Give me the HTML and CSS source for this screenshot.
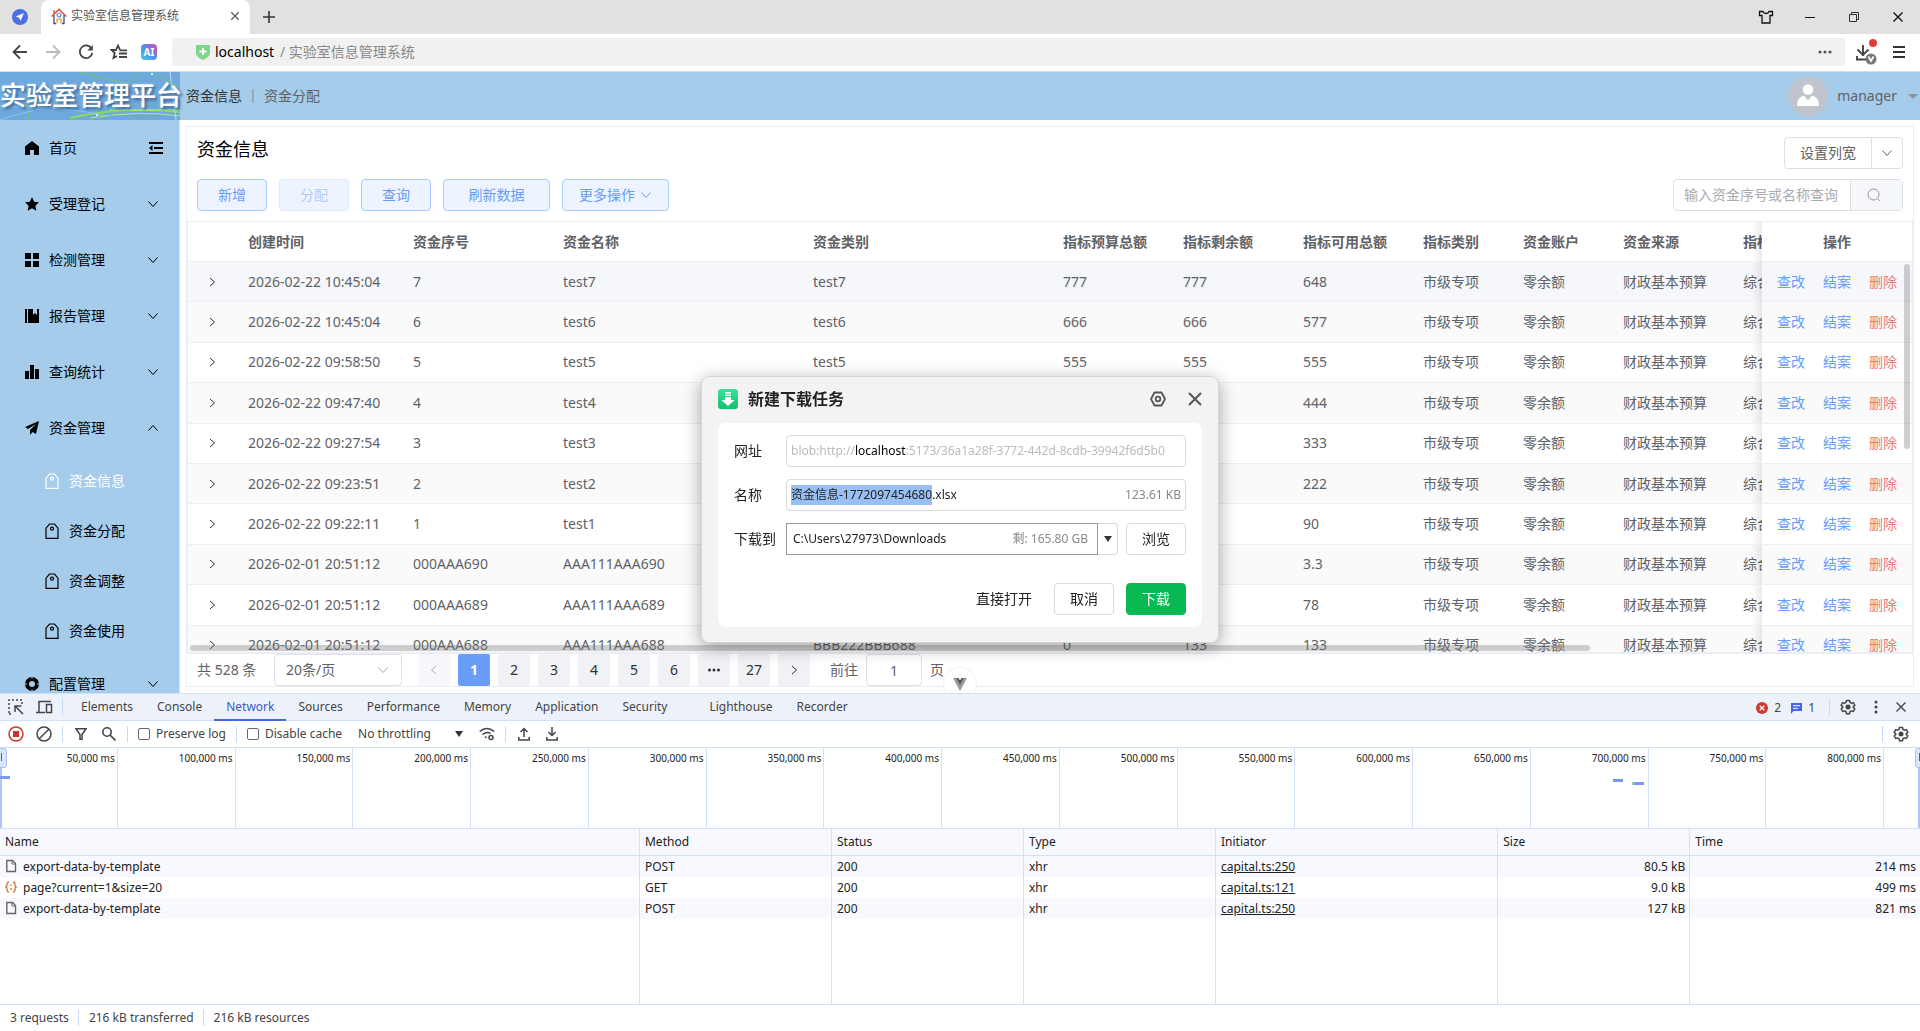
FILE: index.html
```html
<!DOCTYPE html>
<html lang="zh-CN">
<head>
    <meta charset="UTF-8">
    <title>实验室信息管理系统</title>
    <link rel="stylesheet" href="styles.css">
</head>
<body>
    <svg class="sprite" aria-hidden="true">
        <symbol id="i-down" viewBox="0 0 12 12"><path d="M1.5 3.5 6 8.5l4.500-5" fill="none" stroke="currentColor"/></symbol>
        <symbol id="i-right" viewBox="0 0 12 12"><path d="M4 2l4.500 4L4 10" fill="none" stroke="currentColor"/></symbol>
        <symbol id="i-tag" viewBox="0 0 16 16"><path d="M2 15.300V5.200L5.500 1h5L14 5.200v10.100z" fill="none" stroke="currentColor" stroke-width="1.200"/><circle cx="8" cy="5.700" r="1.500" fill="none" stroke="currentColor" stroke-width="1.200"/></symbol>
        <symbol id="i-close" viewBox="0 0 12 12"><path d="M1.500 1.500l9 9m0-9l-9 9" fill="none" stroke="currentColor" stroke-width="1.400"/></symbol>
        <symbol id="i-gear" viewBox="0 0 16 16"><path d="M6.500 1.400h3l.5 2 1.300.8 2-.6 1.500 2.600-1.500 1.400v.9l1.500 1.400-1.500 2.600-2-.6-1.300.8-.5 2h-3l-.5-2-1.300-.8-2 .6-1.500-2.600 1.500-1.400v-.9L1.200 6.200l1.500-2.600 2 .6L6 3.400z" fill="none" stroke="currentColor" stroke-width="1.500" stroke-linejoin="round"/><circle cx="8" cy="8" r="2.500" fill="currentColor"/></symbol>
        <symbol id="i-file" viewBox="0 0 12 14"><path d="M1.800 1.500h5.700l3 3v8H1.800z" fill="none" stroke="currentColor" stroke-width="1.400"/><path d="M7 1.500v3.500h3.500" fill="none" stroke="currentColor"/></symbol>
    </svg>

    <div class="tabbar">
        <svg class="ext" width="16" height="16" viewBox="0 0 16 16"><circle cx="8" cy="8" r="8" fill="#4a70e2"/><path d="M12 4L3.700 7.600l3.500 1.200L8.400 12z" fill="#fff"/></svg>
        <div class="tab">
            <svg width="16" height="17" viewBox="0 0 16 17" fill="none"><path d="M3 7v8.500h2M13 7v8.500h-2" stroke="#3f4a86" stroke-width="1.300"/><path d="M.7 8.500L8 1.200l7.300 7.300M3 5.500V2" stroke="#e0413a" stroke-width="1.300"/><circle cx="8" cy="7" r="2" stroke="#5b8fe0" stroke-width="1.200"/><path d="M6 15.500v-4.300h4v4.300" stroke="#efa135" stroke-width="1.300"/></svg>
            <span>实验室信息管理系统</span>
            <button class="icon-btn tab-close" aria-label="关闭标签页"><svg width="10" height="10"><use href="#i-close"/></svg></button>
        </div>
        <button class="icon-btn new-tab" aria-label="新标签页"><svg width="12" height="12" viewBox="0 0 12 12"><path d="M6 0v12M0 6h12" stroke="#333" stroke-width="1.600"/></svg></button>
        <div class="win-btns">
            <button class="icon-btn" aria-label="皮肤"><svg width="16" height="14" viewBox="0 0 16 14"><path d="M5 1.500H1.500v4H4v7.500h8V5.500h2.500v-4H11q-.5 2-3 2t-3-2z" fill="none" stroke="#111" stroke-width="1.300"/></svg></button>
            <button class="icon-btn" aria-label="最小化"><svg width="10" height="10" viewBox="0 0 10 10"><path d="M0 5.500h10" stroke="#111"/></svg></button>
            <button class="icon-btn" aria-label="还原"><svg width="10" height="10" viewBox="0 0 10 10"><path d="M.5 2.500h7v7h-7zM2.500 2.500v-2h7v7h-2" fill="none" stroke="#333"/></svg></button>
            <button class="icon-btn" aria-label="关闭"><svg width="12" height="12"><use href="#i-close"/></svg></button>
        </div>
    </div>

    <div class="navbar">
        <button class="icon-btn" aria-label="后退"><svg width="16" height="16" viewBox="0 0 16 16"><path d="M15 8H2M8 1.500L1.500 8 8 14.500" fill="none" stroke="#444" stroke-width="1.800"/></svg></button>
        <button class="icon-btn" aria-label="前进"><svg width="16" height="16" viewBox="0 0 16 16"><path d="M1 8h13M8 1.500L14.500 8 8 14.500" fill="none" stroke="#bbb" stroke-width="1.800"/></svg></button>
        <button class="icon-btn" aria-label="刷新"><svg width="16" height="16" viewBox="0 0 16 16"><path d="M13.500 4.500A6.300 6.300 0 1 0 14.300 9" fill="none" stroke="#444" stroke-width="1.800"/><path d="M14.800 1v5.500H9.300z" fill="#444"/></svg></button>
        <button class="icon-btn" aria-label="收藏"><svg width="17" height="16" viewBox="0 0 17 16" fill="none" stroke="#444" stroke-width="1.800"><path d="M10 6L8 1.500 6 6H1.500l3.200 3-1.200 5L7 12"/><path d="M9.500 6.300H17M9 9.500h8M9 13h8"/></svg></button>
        <span class="ai">AI</span>
        <div class="address">
            <svg width="14" height="16" viewBox="0 0 14 16"><path d="M0 1h14v8q0 4-7 7Q0 13 0 9z" fill="#7fd688"/><path d="M7 4v7M3.500 7.500h7" stroke="#fff" stroke-width="2"/></svg>
            <input type="text" value="localhost" aria-label="地址">
            <span>/ 实验室信息管理系统</span>
            <button class="icon-btn more" aria-label="更多"><svg width="14" height="4" viewBox="0 0 14 4"><g fill="#555"><circle cx="2" cy="2" r="1.600"/><circle cx="7" cy="2" r="1.600"/><circle cx="12" cy="2" r="1.600"/></g></svg></button>
        </div>
        <button class="icon-btn dl" aria-label="下载"><svg width="22" height="26" viewBox="0 0 22 26"><path d="M7 6v11M1.500 10.500L7 16l5.500-5.500M1 17v3.500h10" fill="none" stroke="#444" stroke-width="1.900"/><circle cx="17" cy="4" r="4" fill="#dd3f36"/><circle cx="15" cy="20" r="5.500" fill="#777"/><path d="M12.500 17.500L15 22l2.500-4.500" fill="none" stroke="#fff" stroke-width="1.600"/></svg></button>
        <button class="icon-btn" aria-label="菜单"><svg width="12" height="12" viewBox="0 0 12 12"><path d="M0 1h12M0 6h12M0 11h12" stroke="#333" stroke-width="1.800"/></svg></button>
    </div>

    <div class="app">
        <aside class="sidebar">
            <div class="logo">
                <svg width="180" height="48" viewBox="0 0 180 48" fill="none" preserveAspectRatio="none"><path d="M70 46Q120 34 180 40" stroke="#86dc5c" stroke-width="2"/><path d="M90 46q50-8 90-2M110 38h70" stroke="#b6ec7a"/><path d="M25 20l4 28M78 0l50 12M94 0q-4 24 6 48M140 0q-26 20-30 48M150 0l30 16" stroke="#6cc77c"/><path d="M0 48Q40 34 70 34M0 34q60 0 110 10" stroke="#8fc4ee"/><path d="M170 0l6 48" stroke="#b8dcf5"/><circle cx="152" cy="2" r="1" fill="#fff"/><circle cx="97" cy="43" r="1" fill="#fff"/></svg>
                <span>实验室管理平台</span>
            </div>
            <nav class="menu">
                <a href="#"><svg width="14" height="14" viewBox="0 0 14 14"><path d="M7 0l7 5.500V14H9V9H5v5H0V5.500z"/></svg>首页
                    <svg class="tail" width="14" height="12" viewBox="0 0 14 12"><path d="M0 0h14v2H0zM5 5h9v2H5zM0 10h14v2H0zM3.500 3v6L0 6z"/></svg></a>
                <a href="#"><svg width="14" height="14" viewBox="0 0 14 14"><path d="M7 0l2.200 4.700 4.800.5-3.600 3.500 1 5.100L7 11.300l-4.400 2.500 1-5.100L0 5.200l4.800-.5z"/></svg>受理登记<svg class="arrow" width="12" height="12"><use href="#i-down"/></svg></a>
                <a href="#"><svg width="14" height="14" viewBox="0 0 14 14"><path d="M0 0h6v6H0zM8 0h6v6H8zM0 8h6v6H0zM8 8h6v6H8z"/></svg>检测管理<svg class="arrow" width="12" height="12"><use href="#i-down"/></svg></a>
                <a href="#"><svg width="14" height="14" viewBox="0 0 14 14"><path d="M0 0h2v14H0zM3 0h5v6l2-2 2 2V0h2v14H3z"/></svg>报告管理<svg class="arrow" width="12" height="12"><use href="#i-down"/></svg></a>
                <a href="#"><svg width="14" height="14" viewBox="0 0 14 14"><path d="M0 6h4v8H0zM5 0h4v14H5zM10 4h4v10h-4z"/></svg>查询统计<svg class="arrow" width="12" height="12"><use href="#i-down"/></svg></a>
                <a href="#"><svg width="14" height="14" viewBox="0 0 14 14"><path d="M14 0L0 6l3 2 8-5-6 6v5l2.500-3L11 13z"/></svg>资金管理<svg class="arrow up" width="12" height="12"><use href="#i-down"/></svg></a>
                <a class="sub active" href="#"><svg width="16" height="16"><use href="#i-tag"/></svg>资金信息</a>
                <a class="sub" href="#"><svg width="16" height="16"><use href="#i-tag"/></svg>资金分配</a>
                <a class="sub" href="#"><svg width="16" height="16"><use href="#i-tag"/></svg>资金调整</a>
                <a class="sub" href="#"><svg width="16" height="16"><use href="#i-tag"/></svg>资金使用</a>
                <a href="#"><svg width="14" height="14" viewBox="0 0 14 14"><circle cx="7" cy="7" r="5" fill="none" stroke="#000" stroke-width="4"/><path d="M7 0v2M7 12v2M0 7h2M12 7h2" stroke="#a5cceb"/></svg>配置管理<svg class="arrow" width="12" height="12"><use href="#i-down"/></svg></a>
            </nav>
        </aside>

        <div class="right">
            <header class="topbar">
                <a class="current" href="#">资金信息</a>
                <i></i>
                <a href="#">资金分配</a>
                <button class="user">
                    <svg width="40" height="40" viewBox="0 0 40 40"><circle cx="20" cy="20" r="20" fill="#c0c4cc"/><circle cx="20" cy="13.500" r="5.300" fill="#fff"/><path d="M9 30q0-9 7-10.500l4 5 4-5Q31 21 31 30z" fill="#fff"/></svg>
                    manager
                    <span class="caret"></span>
                </button>
            </header>
            <main class="card">
                <div class="card-row">
                    <h2>资金信息</h2>
                    <div class="split">
                        <button>设置列宽</button>
                        <button class="split-arrow" aria-label="展开"><svg width="12" height="12"><use href="#i-down"/></svg></button>
                    </div>
                </div>
                <div class="card-row">
                    <div class="actions">
                        <button>新增</button>
                        <button disabled>分配</button>
                        <button>查询</button>
                        <button class="wide">刷新数据</button>
                        <button class="wide">更多操作<svg width="12" height="12"><use href="#i-down"/></svg></button>
                    </div>
                    <div class="search">
                        <input type="text" placeholder="输入资金序号或名称查询" aria-label="输入资金序号或名称查询">
                        <button aria-label="搜索"><svg width="14" height="14" viewBox="0 0 14 14"><circle cx="6.500" cy="6.500" r="5.500" fill="none" stroke="#909399"/><path d="M10.500 10.500L13 13" stroke="#909399"/></svg></button>
                    </div>
                </div>
                <div class="table-wrap">
                    <table class="grid">
                        <colgroup>
                            <col class="w48"><col class="w165"><col class="w150"><col class="w250"><col class="w250">
                            <col class="w120"><col class="w120"><col class="w120"><col class="w100"><col class="w100"><col class="w120">
                            <col><col class="w150">
                        </colgroup>
                        <thead>
                            <tr>
                                <th></th><th>创建时间</th><th>资金序号</th><th>资金名称</th><th>资金类别</th>
                                <th>指标预算总额</th><th>指标剩余额</th><th>指标可用总额</th><th>指标类别</th><th>资金账户</th><th>资金来源</th>
                                <th>指标</th><th class="fixed">操作</th>
                            </tr>
                        </thead>
                        <tbody id="rows"></tbody>
                    </table>
                    <div class="bar-x"></div>
                    <div class="bar-y"></div>
                </div>
                <div class="pager">
                    <span class="total">共 528 条</span>
                    <div class="size">
                        <select aria-label="每页条数"><option>20条/页</option></select>
                        <svg width="12" height="12"><use href="#i-down"/></svg>
                    </div>
                    <button class="prev" disabled aria-label="上一页"><svg width="12" height="12"><use href="#i-right"/></svg></button>
                    <button class="on">1</button>
                    <button>2</button>
                    <button>3</button>
                    <button>4</button>
                    <button>5</button>
                    <button>6</button>
                    <button aria-label="更多页"><svg width="14" height="4" viewBox="0 0 14 4"><g fill="#303133"><circle cx="2.500" cy="2" r="1.500"/><circle cx="7" cy="2" r="1.500"/><circle cx="11.500" cy="2" r="1.500"/></g></svg></button>
                    <button>27</button>
                    <button aria-label="下一页"><svg width="12" height="12"><use href="#i-right"/></svg></button>
                    <label for="goto">前往</label>
                    <input id="goto" type="text" value="1">
                    <span class="unit">页</span>
                </div>
            </main>
        </div>
        <button class="vue-btn" aria-label="Vue"><svg width="14" height="13" viewBox="0 0 14 13"><path d="M0 0h3l4 7 4-7h3L7 13z" fill="#999"/><path d="M3 0h2.500L7 2.500 8.500 0H11L7 7z" fill="#555"/></svg></button>
    </div>

    <section class="devtools">
        <div class="dt-tabs">
            <button class="icon-btn" aria-label="Inspect"><svg width="16" height="16" viewBox="0 0 16 16" fill="none" stroke="#444" stroke-width="1.500"><path d="M1 14V1h13v4M1 15h4" stroke-dasharray="2 2"/><path d="M15 15L7.500 7.500M7 13V7h6.500"/></svg></button>
            <button class="icon-btn" aria-label="Device"><svg width="17" height="14" viewBox="0 0 17 14" fill="none" stroke="#444" stroke-width="1.500"><path d="M3 12V1.500h12M0 12.500h9M10.500 4.500h5v8h-5z"/></svg></button>
            <i class="sep"></i>
            <nav>
                <button>Elements</button><button>Console</button><button class="on">Network</button><button>Sources</button><button>Performance</button><button>Memory</button><button>Application</button><button class="security">Security</button><button>Lighthouse</button><button>Recorder</button>
            </nav>
            <div class="dt-right">
                <span class="count"><svg width="12" height="12" viewBox="0 0 12 12"><circle cx="6" cy="6" r="6" fill="#cd3b31"/><path d="M3.700 3.700l4.600 4.600m0-4.600L3.700 8.300" stroke="#fff" stroke-width="1.300"/></svg>2</span>
                <span class="count"><svg width="11" height="11" viewBox="0 0 11 11"><path d="M0 0h11v8H2.500L0 11z" fill="#4667e8"/><path d="M2 2.700h7M2 5.300h5" stroke="#fff"/></svg>1</span>
                <i class="sep"></i>
                <button class="icon-btn" aria-label="Settings"><svg width="16" height="16"><use href="#i-gear"/></svg></button>
                <button class="icon-btn" aria-label="More"><svg width="4" height="14" viewBox="0 0 4 14"><g fill="#444"><circle cx="2" cy="2" r="1.500"/><circle cx="2" cy="7" r="1.500"/><circle cx="2" cy="12" r="1.500"/></g></svg></button>
                <button class="icon-btn dt-close" aria-label="Close"><svg width="12" height="12"><use href="#i-close"/></svg></button>
            </div>
        </div>
        <div class="dt-tools">
            <button class="icon-btn" aria-label="Record"><svg width="16" height="16" viewBox="0 0 16 16"><circle cx="8" cy="8" r="7" fill="none" stroke="#c5392f" stroke-width="1.500"/><path d="M5 5h6v6H5z" fill="#c5392f"/></svg></button>
            <button class="icon-btn" aria-label="Clear"><svg width="16" height="16" viewBox="0 0 16 16" fill="none" stroke="#444" stroke-width="1.500"><circle cx="8" cy="8" r="7"/><path d="M3 13L13 3"/></svg></button>
            <i class="sep"></i>
            <button class="icon-btn" aria-label="Filter"><svg width="12" height="12" viewBox="0 0 12 12"><path d="M1 .8h10L7 6.500v5H5v-5z" fill="none" stroke="#444" stroke-width="1.500"/></svg></button>
            <button class="icon-btn" aria-label="Search"><svg width="14" height="14" viewBox="0 0 14 14" fill="none" stroke="#444" stroke-width="1.600"><circle cx="5" cy="5" r="4.200"/><path d="M8 8l5.500 5.500"/></svg></button>
            <i class="sep"></i>
            <label><input type="checkbox">Preserve log</label>
            <i class="sep"></i>
            <label><input type="checkbox">Disable cache</label>
            <div class="throttle"><select aria-label="Throttling"><option>No throttling</option></select><span></span></div>
            <button class="icon-btn" aria-label="Network conditions"><svg width="16" height="14" viewBox="0 0 16 14" fill="none" stroke="#444" stroke-width="1.500"><path d="M.7 4.500q7-6 14.600 0M3.500 7.500q4.500-3.500 8 -1"/><path d="M6 9.500l1.500 1.500" /><circle cx="12" cy="10.500" r="2"/></svg></button>
            <i class="sep"></i>
            <button class="icon-btn" aria-label="Import"><svg width="12" height="14" viewBox="0 0 12 14" fill="none" stroke="#444" stroke-width="1.500"><path d="M6 10V1.500M2.500 5L6 1.500 9.500 5M.8 10v3h10.400v-3"/></svg></button>
            <button class="icon-btn" aria-label="Export"><svg width="12" height="14" viewBox="0 0 12 14" fill="none" stroke="#444" stroke-width="1.500"><path d="M6 0v8.500M2.500 5L6 8.500 9.500 5M.8 10v3h10.400v-3"/></svg></button>
            <div class="dt-right"><i class="sep"></i><button class="icon-btn" aria-label="Network settings"><svg width="16" height="16"><use href="#i-gear"/></svg></button></div>
        </div>
        <div class="timeline">
            <div class="ticks" id="ticks"></div>
            <span class="handle"></span><span class="handle end"></span>
            <span class="mark first"></span><span class="mark second"></span><span class="mark third"></span>
        </div>
        <div class="requests">
            <table>
                <thead><tr><th class="c-name">Name</th><th class="c-std">Method</th><th class="c-std">Status</th><th class="c-std">Type</th><th class="c-init">Initiator</th><th class="c-std">Size</th><th>Time</th></tr></thead>
                <tbody>
                    <tr><td><svg width="12" height="14"><use href="#i-file"/></svg>export-data-by-template</td><td>POST</td><td>200</td><td>xhr</td><td><a href="#">capital.ts:250</a></td><td class="num">80.5 kB</td><td class="num">214 ms</td></tr>
                    <tr><td><svg width="12" height="14" viewBox="0 0 12 14" fill="none" stroke="#d9713c" stroke-width="1.300"><path d="M4 2Q2 2 2 4.500T.3 7Q2 7 2 9.500T4 12M8 2q2 0 2 2.500T11.700 7Q10 7 10 9.500T8 12M6 4.500V6M6 8v2"/></svg>page?current=1&amp;size=20</td><td>GET</td><td>200</td><td>xhr</td><td><a href="#">capital.ts:121</a></td><td class="num">9.0 kB</td><td class="num">499 ms</td></tr>
                    <tr><td><svg width="12" height="14"><use href="#i-file"/></svg>export-data-by-template</td><td>POST</td><td>200</td><td>xhr</td><td><a href="#">capital.ts:250</a></td><td class="num">127 kB</td><td class="num">821 ms</td></tr>
                    <tr class="rest"><td></td><td></td><td></td><td></td><td></td><td></td><td></td></tr>
                </tbody>
            </table>
        </div>
        <div class="status"><span>3 requests</span><span>216 kB transferred</span><span>216 kB resources</span></div>
    </section>

    <div class="dialog" role="dialog" aria-labelledby="dlg-title">
        <div class="dlg-head">
            <svg width="20" height="20" viewBox="0 0 20 20"><defs><linearGradient id="g" x2="0" y2="1"><stop stop-color="#3fe09a"/><stop offset="1" stop-color="#12c070"/></linearGradient></defs><rect width="20" height="20" rx="3" fill="url(#g)"/><path d="M7 3h6v1.500H7zM7 5.500h6V7H7zM7 8h6v3h3.500L10 17l-6.500-6H7z" fill="#fff"/></svg>
            <h3 id="dlg-title">新建下载任务</h3>
            <button class="icon-btn" aria-label="设置"><svg width="16" height="16" viewBox="0 0 16 16" fill="none" stroke="#555" stroke-width="1.800"><path d="M4.500 1.500h7L15 8l-3.500 6.500h-7L1 8z" stroke-linejoin="round"/><circle cx="8" cy="8" r="2.300"/></svg></button>
            <button class="icon-btn" aria-label="关闭"><svg width="16" height="16" viewBox="0 0 16 16"><path d="M2 2l12 12M14 2L2 14" stroke="#555" stroke-width="2"/></svg></button>
        </div>
        <form class="dlg-body">
            <div class="line">
                <label for="url">网址</label>
                <div class="field url"><span>blob:http://</span><b>localhost</b><input id="url" type="text" readonly value=":5173/36a1a28f-3772-442d-8cdb-39942f6d5b0"></div>
            </div>
            <div class="line">
                <label for="fname">名称</label>
                <div class="field"><input id="fname" type="text" value="资金信息-1772097454680.xlsx"><span>123.61 KB</span></div>
            </div>
            <div class="line">
                <label for="path">下载到</label>
                <div class="combo">
                    <div class="combo-text"><input id="path" type="text" value="C:\Users\27973\Downloads"><span>剩: 165.80 GB</span></div>
                    <button type="button" aria-label="选择目录"><span></span></button>
                </div>
                <button type="button" class="btn">浏览</button>
            </div>
            <div class="dlg-foot">
                <button type="button" class="plain">直接打开</button>
                <button type="button" class="btn">取消</button>
                <button type="button" class="btn ok">下载</button>
            </div>
        </form>
    </div>
    <script src="script.js"></script>
</body>
</html>
```

FILE: styles.css
```css
* {
    box-sizing: border-box;
}
body {
    margin: 0;
    height: 100vh;
    overflow: hidden;
    display: grid;
    grid-template-rows: 34px 38px 1fr 338px;
    grid-template-columns: 100%;
    font-family: "Noto Sans", "Noto Sans CJK SC", sans-serif;
    font-size: 14px;
    line-height: 20px;
    color: #606266;
    background: #fff;
}
button, input, select {
    font: inherit;
    color: inherit;
    margin: 0;
    padding: 0;
    border: none;
    background: none;
    outline: none;
}
button {
    cursor: pointer;
}
a {
    color: inherit;
    text-decoration: none;
}
svg {
    flex: none;
    display: block;
}
.sprite {
    position: absolute;
    width: 0;
    height: 0;
}
.icon-btn {
    display: flex;
    align-items: center;
    justify-content: center;
    flex: none;
}

/* browser frame */
.tabbar {
    display: flex;
    align-items: center;
    background: #e1e1e1;
    color: #111;
}
.ext {
    margin: 0 13px 0 12px;
}
.tab {
    width: 209px;
    height: 34px;
    padding: 0 8px 2px 10px;
    display: flex;
    align-items: center;
    gap: 4px;
    background: #fff;
    border-radius: 8px 8px 0 0;
    font-size: 12px;
    color: #555;
}
.tab-close {
    width: 14px;
    margin-left: auto;
}
.new-tab {
    width: 38px;
}
.win-btns {
    display: flex;
    margin-left: auto;
}
.win-btns button {
    width: 44px;
    height: 34px;
}
.navbar {
    display: flex;
    align-items: center;
    padding: 0 11px 1px 3px;
    border-bottom: 1px solid #ddd;
}
.navbar > .icon-btn {
    width: 33px;
    height: 32px;
}
.ai {
    width: 16px;
    height: 16px;
    margin: 0 15px 0 6px;
    border-radius: 4px;
    background: linear-gradient(45deg, #3fd0e8, #4f8ff0 50%, #e83fa8);
    color: #fff;
    font-size: 10px;
    font-weight: bold;
    line-height: 16px;
    text-align: center;
}
.address {
    flex: 1;
    display: flex;
    align-items: center;
    height: 28px;
    padding: 0 12px 0 24px;
    background: #f1f1f1;
    border-radius: 4px;
    color: #888;
}
.address input {
    width: 60px;
    margin: 0 5px 0 5px;
    color: #000;
}
.address .more {
    width: 16px;
    margin-left: auto;
}
.navbar > .dl {
    width: 44px;
}
.navbar > .dl + .icon-btn {
    width: 20px;
}

/* application */
.app {
    position: relative;
    display: flex;
    min-height: 0;
    overflow: hidden;
}
.sidebar {
    width: 180px;
    flex: none;
    background: #a5cceb;
    border-right: 1px solid #dcdfe6;
    color: #000;
}
.logo {
    position: relative;
    height: 48px;
    width: 180px;
    background: #6fa8dc;
}
.logo span {
    position: absolute;
    left: 0;
    top: 0;
    font-size: 26px;
    font-weight: 500;
    line-height: 46px;
    color: #fff;
    white-space: nowrap;
    text-shadow: 2px 2px 3px #2f5f90, 0 0 2px #d8ecff;
}
.menu a {
    display: flex;
    align-items: center;
    gap: 10px;
    height: 56px;
    padding: 0 20px 0 25px;
}
.menu .arrow {
    margin-left: auto;
}
.menu .tail {
    margin: 0 -4px 0 auto;
}
.menu .up {
    transform: rotate(180deg);
}
.menu .sub {
    height: 50px;
    padding-left: 44px;
    gap: 9px;
}
.menu .active {
    color: #fff;
}
.right {
    flex: 1;
    min-width: 0;
    display: flex;
    flex-direction: column;
}
.topbar {
    display: flex;
    align-items: center;
    gap: 10px;
    height: 48px;
    flex: none;
    padding: 0 2px 0 6px;
    background: #a5cceb;
}
.topbar i {
    width: 2px;
    height: 14px;
    background: #a0a8b0;
}
.topbar .current {
    color: #303133;
}
.user {
    display: flex;
    align-items: center;
    gap: 9px;
    margin-left: auto;
}
.caret {
    margin-left: 2px;
    border: 5px solid transparent;
    border-top-color: #909399;
    border-bottom: none;
}
.card {
    flex: 1;
    min-height: 0;
    display: flex;
    flex-direction: column;
    margin: 6px;
    border: 1px solid #ebeef5;
}
.card-row {
    display: flex;
    align-items: flex-start;
    justify-content: space-between;
    height: 32px;
    flex: none;
    margin: 10px 10px 0;
}
.card h2 {
    margin: 0;
    font-size: 18px;
    font-weight: normal;
    line-height: 24px;
    color: #000;
}
.split {
    display: flex;
    height: 32px;
    border: 1px solid #dcdfe6;
    border-radius: 4px;
}
.split button {
    padding: 0 15px;
}
.split .split-arrow {
    padding: 0 9px;
    border-left: 1px solid #dcdfe6;
}
.actions {
    display: flex;
    gap: 12px;
}
.actions button {
    display: flex;
    align-items: center;
    justify-content: center;
    gap: 5px;
    width: 70px;
    height: 32px;
    background: #eef4ff;
    border: 1px solid #a8caff;
    border-radius: 4px;
    color: #6a9df8;
}
.actions button:disabled {
    color: #b0cdfb;
    border-color: #dbe8fd;
}
.actions .wide {
    width: 107px;
}
.search {
    display: flex;
    width: 230px;
    height: 32px;
    border: 1px solid #dcdfe6;
    border-radius: 4px;
}
.search input {
    flex: 1;
    min-width: 0;
    padding-left: 10px;
}
.search input::placeholder {
    color: #a8abb2;
}
.search button {
    width: 52px;
    padding-left: 16px;
    background: #f5f7fa;
    border-left: 1px solid #dcdfe6;
}
.table-wrap {
    position: relative;
    flex: 1;
    min-height: 0;
    overflow: hidden;
    margin-top: 10px;
    border: 1px solid #ebeef5;
    border-bottom-width: 2px;
}
.grid {
    table-layout: fixed;
    width: 2104px;
    height: 444px;
    border-spacing: 0;
}
.grid th, .grid td {
    height: 40px;
    padding: 0 12px;
    border-bottom: 1px solid #ebeef5;
    text-align: left;
    white-space: nowrap;
}
.w48 { width: 48px; }
.w100 { width: 100px; }
.w120 { width: 120px; }
.w150 { width: 150px; }
.w165 { width: 165px; }
.w250 { width: 250px; }
.grid tr {
    background: #fff;
}
.grid tbody tr:nth-child(even) {
    background: #fafafa;
}
.grid tbody tr:first-child {
    background: #f5f7fa;
}
.grid td:first-child {
    padding: 0 18px;
}
.grid td:first-child button {
    display: block;
    color: #303133;
}
.grid .fixed {
    position: sticky;
    right: 0;
    padding: 0;
    background: inherit;
    text-align: center;
}
.grid .fixed::before {
    content: "";
    position: absolute;
    left: -10px;
    top: 0;
    bottom: 0;
    width: 10px;
    background: linear-gradient(to left, rgba(0, 0, 0, 0.08), transparent);
}
.grid .fixed a {
    margin: 0 9px;
    color: #6a9df8;
}
.grid .fixed a.del {
    color: #e57b78;
}
.bar-x, .bar-y {
    position: absolute;
    border-radius: 3px;
    background: rgba(120, 120, 120, 0.35);
}
.bar-x {
    left: 2px;
    bottom: 1px;
    width: 81.2%;
    height: 6px;
}
.bar-y {
    right: 2px;
    top: 42px;
    width: 6px;
    height: 43%;
}
.pager {
    display: flex;
    align-items: center;
    gap: 8px;
    height: 32px;
    flex: none;
    padding-left: 10px;
}
.size {
    position: relative;
    width: 128px;
    margin: 0 8px;
}
.size select {
    appearance: none;
    width: 100%;
    height: 32px;
    padding-left: 11px;
    border: 1px solid #dcdfe6;
    border-radius: 4px;
}
.size svg {
    position: absolute;
    right: 13px;
    top: 10px;
    color: #a8abb2;
    pointer-events: none;
}
.pager button {
    display: flex;
    align-items: center;
    justify-content: center;
    width: 32px;
    height: 32px;
    background: #f0f2f5;
    border-radius: 2px;
    color: #303133;
}
.pager button:disabled {
    background: #f5f7fa;
    color: #a8abb2;
}
.pager .prev svg {
    transform: rotate(180deg);
}
.pager .on {
    background: #6a9df8;
    color: #fff;
    font-weight: bold;
}
.pager label {
    margin-left: 12px;
}
.pager input {
    width: 56px;
    height: 32px;
    border: 1px solid #dcdfe6;
    border-radius: 4px;
    text-align: center;
}
.total {
    width: 61px;
    white-space: nowrap;
}
.vue-btn {
    position: absolute;
    left: 50%;
    bottom: -7px;
    width: 32px;
    height: 32px;
    margin-left: -16px;
    padding-left: 9px;
    border-radius: 50%;
    background: #fff;
    box-shadow: 0 0 3px rgba(0, 0, 0, 0.12);
}

/* devtools */
.devtools {
    display: flex;
    flex-direction: column;
    border-top: 1px solid #d3e0fb;
    font-size: 12px;
    line-height: 16px;
    color: #444;
}
.dt-tabs, .dt-tools {
    display: flex;
    align-items: center;
    flex: none;
    height: 27px;
    padding: 0 5px 0 2px;
    border-bottom: 1px solid #d3e0fb;
}
.dt-tabs {
    padding-right: 8px;
    background: #edf2fa;
}
.dt-tabs .icon-btn, .dt-tools .icon-btn {
    width: 28px;
    height: 26px;
}
.dt-tabs .dt-close {
    width: 22px;
}
.sep {
    width: 1px;
    height: 16px;
    margin: 0 4px;
    background: #c8dafb;
}
.dt-tabs nav {
    display: flex;
    padding-left: 2px;
}
.dt-tabs nav button {
    height: 27px;
    padding: 2px 12px 0;
    border-bottom: 2px solid transparent;
}
.dt-tabs nav .on {
    color: #3a5bd0;
    border-color: #4669e0;
}
.dt-tabs nav .security {
    margin-right: 18px;
}
.dt-right {
    display: flex;
    align-items: center;
    margin-left: auto;
}
.count {
    display: flex;
    align-items: center;
    gap: 6px;
    padding-top: 2px;
    margin-right: 10px;
}
.dt-tools label {
    display: flex;
    align-items: center;
    padding: 0 6px;
}
.dt-tools input {
    appearance: none;
    width: 12px;
    height: 12px;
    margin-right: 6px;
    border: 1px solid #666;
    border-radius: 2px;
}
.throttle {
    display: flex;
    align-items: center;
    margin: 0 10px;
}
.throttle select {
    appearance: none;
    width: 97px;
}
.throttle span, .combo button span {
    border: 4px solid transparent;
    border-top: 6px solid #333;
    border-bottom: none;
}
.timeline {
    position: relative;
    height: 81px;
    flex: none;
    padding-right: 36px;
    border-bottom: 1px solid #d3e0fb;
}
.ticks {
    display: grid;
    grid-template-columns: repeat(16, 1fr);
    height: 100%;
    font-size: 10px;
    line-height: 20px;
    color: #222;
    text-align: right;
}
.ticks span {
    padding-right: 2px;
    border-right: 1px solid #d3e0fb;
    white-space: nowrap;
}
.handle {
    position: absolute;
    left: 0;
    top: 0;
    bottom: 0;
    width: 2px;
    background: #b0c6f8;
}
.handle::before {
    content: "";
    position: absolute;
    left: -2px;
    width: 7px;
    height: 18px;
    border: 1px solid #a9c1f5;
    border-radius: 3px;
    background: #d9e5fd;
}
.handle::after {
    content: "";
    position: absolute;
    left: 1px;
    top: 5px;
    width: 1px;
    height: 8px;
    background: #3a5bd0;
}
.handle.end {
    left: auto;
    right: 0;
}
.handle.end::before {
    left: -3px;
}
.mark {
    position: absolute;
    height: 3px;
    background: #789af2;
}
.mark.first {
    left: 0;
    top: 28px;
    width: 10px;
}
.mark.second {
    left: 84%;
    top: 31px;
    width: 10px;
}
.mark.third {
    left: 85%;
    top: 34px;
    width: 12px;
    border-left: 2px solid #8fd3a0;
}
.requests {
    flex: 1;
    min-height: 0;
}
.requests table {
    table-layout: fixed;
    width: 100%;
    height: 100%;
    border-spacing: 0;
    color: #222;
}
.requests th {
    height: 27px;
    padding: 0 4px 0 5px;
    border-bottom: 1px solid #d3e0fb;
    background: #f7f9fe;
    font-weight: normal;
    text-align: left;
}
.requests td {
    height: 21px;
    padding: 0 4px 0 5px;
}
.requests th:not(:last-child), .requests td:not(:last-child) {
    border-right: 1px solid #d3e0fb;
}
.c-name { width: 33.333%; }
.c-std { width: 10%; }
.c-init { width: 14.700%; }
.requests tbody tr:nth-child(odd) {
    background: #f7f9fe;
}
.requests td svg {
    display: inline-block;
    margin-right: 6px;
    vertical-align: -2px;
    color: #666;
}
.requests td a {
    text-decoration: underline;
}
.requests .num {
    text-align: right;
}
.requests .rest td {
    height: auto;
}
.status {
    display: flex;
    align-items: center;
    flex: none;
    height: 27px;
    border-top: 1px solid #d3e0fb;
}
.status span {
    padding: 0 9px 0 10px;
}
.status span + span {
    border-left: 1px solid #c8dafb;
}

/* download dialog */
.dialog {
    position: absolute;
    left: 50%;
    top: 376px;
    width: 518px;
    margin-left: -259px;
    padding: 0 16px 15px;
    background: #f3f3f3;
    border: 1px solid #d6d6d6;
    border-radius: 8px;
    box-shadow: 0 4px 18px rgba(0, 0, 0, 0.35);
    color: #222;
}
.dlg-head {
    display: flex;
    align-items: center;
    height: 46px;
    padding-bottom: 2px;
}
.dlg-head h3 {
    flex: 1;
    margin: 0 0 0 10px;
    font-size: 16px;
    line-height: 24px;
}
.dlg-head .icon-btn {
    width: 37px;
}
.dlg-head .icon-btn:last-child {
    margin-right: -11px;
}
.dlg-body {
    padding: 12px 16px;
    background: #fff;
    border-radius: 8px;
}
.line {
    display: flex;
    align-items: center;
    margin-bottom: 12px;
}
.line label {
    width: 52px;
}
.field {
    flex: 1;
    display: flex;
    align-items: center;
    height: 32px;
    padding: 0 4px;
    border: 1px solid #d9d9d9;
    border-radius: 4px;
    font-size: 12px;
}
.field input, .combo input {
    flex: 1;
    min-width: 0;
}
.field span, .combo span {
    color: #888;
}
.url, .field.url span {
    color: #bbb;
}
.url b {
    font-weight: normal;
    color: #000;
}
#fname::selection {
    background: #99c0f5;
    color: #222;
}
.combo {
    flex: 1;
    display: flex;
    height: 32px;
    margin-right: 8px;
    font-size: 12px;
}
.combo-text {
    flex: 1;
    display: flex;
    align-items: center;
    padding: 0 9px 0 6px;
    border: 1px solid #999;
}
.combo button {
    display: flex;
    align-items: center;
    justify-content: center;
    width: 20px;
    border: 1px solid #d9d9d9;
    border-left: none;
    border-radius: 0 4px 4px 0;
}
.btn {
    width: 60px;
    height: 32px;
    border: 1px solid #d9d9d9;
    border-radius: 4px;
}
.ok {
    background: #07b853;
    border-color: #07b853;
    color: #fff;
}
.dlg-foot {
    display: flex;
    justify-content: flex-end;
    gap: 12px;
    margin-top: 28px;
}
.plain {
    margin-right: 10px;
}
```

FILE: script.js
```js
const rows = [
    ['2026-02-22 10:45:04', '7', 'test7', 'test7', '777', '777', '648'],
    ['2026-02-22 10:45:04', '6', 'test6', 'test6', '666', '666', '577'],
    ['2026-02-22 09:58:50', '5', 'test5', 'test5', '555', '555', '555'],
    ['2026-02-22 09:47:40', '4', 'test4', 'test4', '444', '444', '444'],
    ['2026-02-22 09:27:54', '3', 'test3', 'test3', '333', '333', '333'],
    ['2026-02-22 09:23:51', '2', 'test2', 'test2', '222', '222', '222'],
    ['2026-02-22 09:22:11', '1', 'test1', 'test1', '111', '111', '90'],
    ['2026-02-01 20:51:12', '000AAA690', 'AAA111AAA690', 'BBB222BBB690', '0', '3.3', '3.3'],
    ['2026-02-01 20:51:12', '000AAA689', 'AAA111AAA689', 'BBB222BBB689', '0', '78', '78'],
    ['2026-02-01 20:51:12', '000AAA688', 'AAA111AAA688', 'BBB222BBB688', '0', '133', '133']
];
const common = ['市级专项', '零余额', '财政基本预算', '综合'];

document.getElementById('rows').innerHTML = rows.map(row => `<tr>
    <td><button aria-label="展开"><svg width="12" height="12"><use href="#i-right"/></svg></button></td>
    ${row.concat(common).map(text => `<td>${text}</td>`).join('')}
    <td class="fixed"><a href="#">查改</a><a href="#">结案</a><a class="del" href="#">删除</a></td>
</tr>`).join('');

let ticks = '';
for (let i = 1; i <= 16; i++) {
    ticks += `<span>${i * 50},000 ms</span>`;
}
document.getElementById('ticks').innerHTML = ticks;

// select the file name without its extension
const fname = document.getElementById('fname');
fname.focus();
fname.setSelectionRange(0, fname.value.lastIndexOf('.'));
```
